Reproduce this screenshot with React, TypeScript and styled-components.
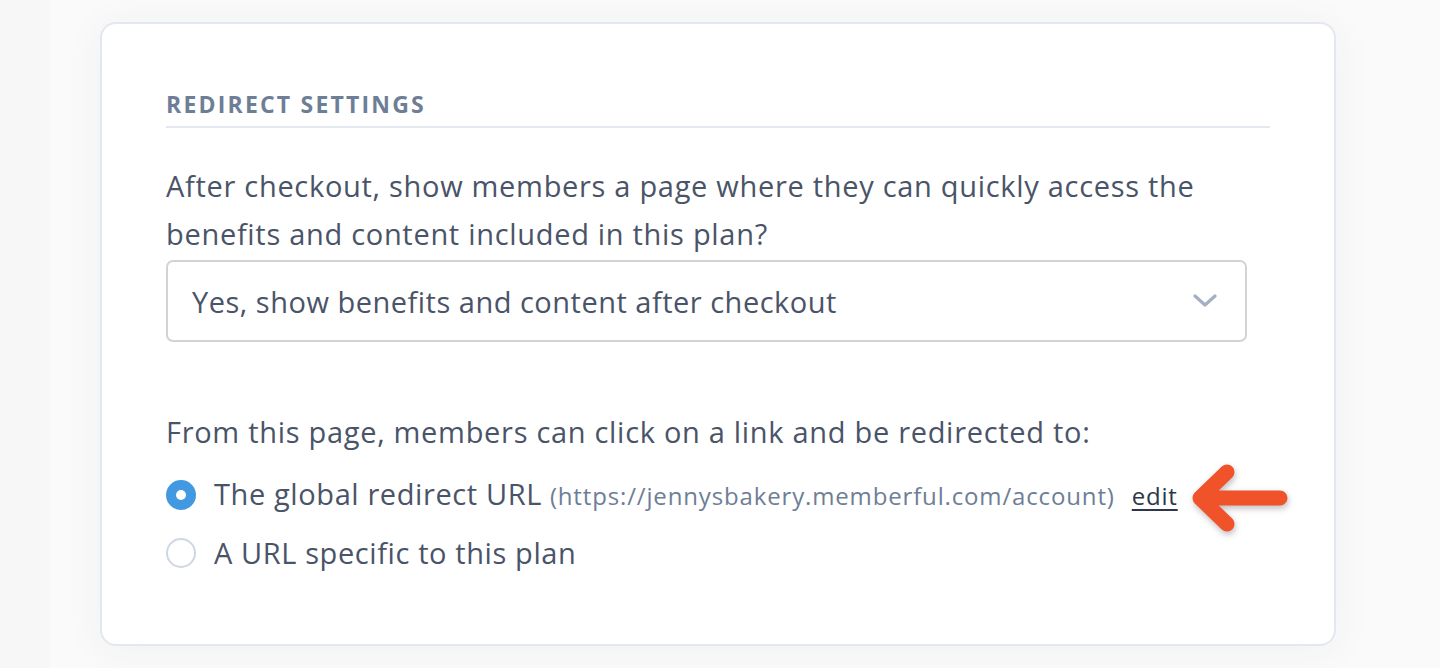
import React from "react";
import styled, { createGlobalStyle } from "styled-components";

const Global = createGlobalStyle`
  html, body { margin: 0; padding: 0; }
  body {
    background: #f9f9fa;
    font-family: "Open Sans", "Noto Sans", sans-serif;
    -webkit-font-smoothing: antialiased;
  }
`;

const Page = styled.div`
  height: 668px;
  padding: 22px 104px 0 100px;
  box-sizing: border-box;
  background: linear-gradient(90deg, #f7f7f8 0, #f7f7f8 50px, #fafafa 50px);
  overflow: hidden;
`;

const Card = styled.section`
  position: relative;
  width: 1236px;
  height: 624px;
  box-sizing: border-box;
  background: #fff;
  border: 2px solid #e3e7f0;
  border-radius: 16px;
  box-shadow: 0 4px 40px rgba(40, 50, 80, 0.05);
  padding: 66px 64px 0 64px;
`;

const Heading = styled.h2`
  margin: 0;
  font-size: 23px;
  line-height: 28px;
  font-weight: 700;
  letter-spacing: 2.2px;
  color: #6e7e96;
  padding-bottom: 8px;
  border-bottom: 2px solid #e4e8f1;
`;

const Body = styled.p`
  margin: 0;
  font-size: 29px;
  letter-spacing: 0.7px;
  color: #4a5468;
`;

const Question = styled(Body)`
  margin-top: 34px;
  line-height: 48px;
`;

const Select = styled.div`
  margin-top: 2px;
  width: 1081px;
  height: 82px;
  box-sizing: border-box;
  border: 2px solid #d3d3d6;
  border-radius: 7px;
  display: flex;
  align-items: center;
  justify-content: space-between;
  padding: 0 28px 0 24px;
  font-size: 29px;
  letter-spacing: 0.5px;
  color: #4a5468;
`;

const Lead = styled(Body)`
  margin-top: 70px;
  line-height: 40px;
`;

const Options = styled.div`
  margin-top: 22px;
  display: flex;
  flex-direction: column;
  gap: 17px;
`;

const Option = styled.label`
  display: flex;
  align-items: center;
  gap: 18px;
  font-size: 29px;
  letter-spacing: 0.6px;
  line-height: 40px;
  color: #4a5468;
`;

const Radio = styled.span<{ $checked?: boolean }>`
  width: 30px;
  height: 30px;
  box-sizing: border-box;
  border-radius: 50%;
  flex: none;
  background: ${(p) => (p.$checked ? "#4299e1" : "#fff")};
  border: ${(p) => (p.$checked ? "none" : "2px solid #cfd7e2")};
  display: flex;
  align-items: center;
  justify-content: center;
  &::after {
    content: "";
    display: ${(p) => (p.$checked ? "block" : "none")};
    width: 10px;
    height: 10px;
    border-radius: 50%;
    background: #fff;
  }
`;

const Url = styled.span`
  font-size: 24px;
  letter-spacing: 0.85px;
  color: #6e7e96;
  margin-left: 8px;
`;

const Edit = styled.a`
  font-size: 24px;
  letter-spacing: 0.8px;
  color: #2d3748;
  text-decoration: underline;
  text-underline-offset: 4px;
  margin-left: 17px;
`;

const Arrow = styled.svg`
  position: absolute;
  left: 1080px;
  top: 430px;
  overflow: visible;
  filter: drop-shadow(1px 3px 3px rgba(0, 0, 0, 0.25));
`;

export default function App() {
  return (
    <>
      <Global />
      <Page>
        <Card>
          <Heading>REDIRECT SETTINGS</Heading>
          <Question>
            After checkout, show members a page where they can quickly access the benefits and
            content included in this plan?
          </Question>
          <Select>
            <span>Yes, show benefits and content after checkout</span>
            <svg width="24" height="14" viewBox="0 0 24 14">
              <path d="M2 2 L12 11 L22 2" fill="none" stroke="#a3afc2" strokeWidth="3.2" strokeLinecap="round" strokeLinejoin="round" />
            </svg>
          </Select>
          <Lead>From this page, members can click on a link and be redirected to:</Lead>
          <Options>
            <Option>
              <Radio $checked />
              <span>
                The global redirect URL<Url>(https://jennysbakery.memberful.com/account)</Url>
                <Edit>edit</Edit>
              </span>
            </Option>
            <Option>
              <Radio />
              <span>A URL specific to this plan</span>
            </Option>
          </Options>
          <Arrow width="112" height="90" viewBox="0 0 112 90">
            <path d="M98 44 L18 44 M45 18 L18 44 L45 70" fill="none" stroke="#f0522a" strokeWidth="15" strokeLinecap="round" strokeLinejoin="round" />
          </Arrow>
        </Card>
      </Page>
    </>
  );
}
